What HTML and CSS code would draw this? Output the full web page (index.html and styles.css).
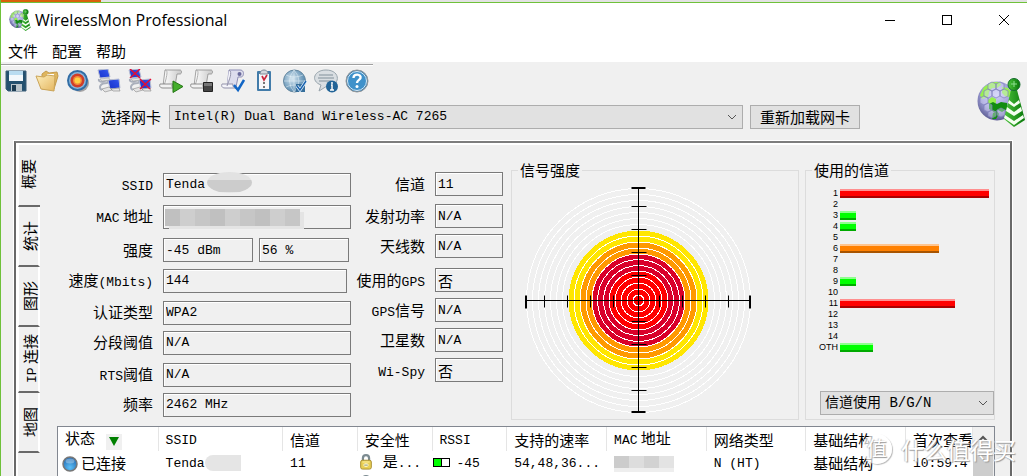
FILE: index.html
```html
<!DOCTYPE html>
<html lang="zh-CN">
<head>
<meta charset="utf-8">
<title>WirelessMon Professional</title>
<link rel="stylesheet" href="styles.css">
</head>
<body>
<svg class="defs" width="0" height="0" aria-hidden="true">
  <defs>
    <radialGradient id="globeFill" cx=".5" cy=".35" r=".65"><stop offset="0" stop-color="#cfcff6"/><stop offset=".6" stop-color="#9c9cd4"/><stop offset="1" stop-color="#5c5c92"/></radialGradient>
    <linearGradient id="greenFill" x1="0" x2="1"><stop offset="0" stop-color="#4cc43c"/><stop offset="1" stop-color="#08770a"/></linearGradient>
    <linearGradient id="paper" x1="0" x2="1"><stop offset="0" stop-color="#fff"/><stop offset="1" stop-color="#c8c8c8"/></linearGradient>
    <linearGradient id="folder" x1="0" y1="0" x2="1" y2="1"><stop offset="0" stop-color="#fdeebb"/><stop offset="1" stop-color="#e4b660"/></linearGradient>
    <linearGradient id="screen" x1="0" y1="1" x2="1" y2="0"><stop offset="0" stop-color="#0c20b4"/><stop offset=".6" stop-color="#2a4be4"/><stop offset="1" stop-color="#6f95ff"/></linearGradient>
    <radialGradient id="blueBall" cx=".5" cy=".75" r=".8"><stop offset="0" stop-color="#5cc0f8"/><stop offset="1" stop-color="#1a5da6"/></radialGradient>
    <radialGradient id="greenBall" cx=".5" cy=".75" r=".8"><stop offset="0" stop-color="#a6dc78"/><stop offset="1" stop-color="#4f8a3a"/></radialGradient>
    <radialGradient id="netFill" cx=".4" cy=".4" r=".6"><stop offset="0" stop-color="#d5e6f0"/><stop offset="1" stop-color="#5588ae"/></radialGradient>
    <symbol id="logo" viewBox="0 0 49 49">
      <circle cx="20" cy="23" r="19.500" fill="url(#globeFill)"/>
      <path d="M3 17 7 9l8-5 8 0 1 3-4 3-5 0-3 4-1 5-6 2zM25 9l6 1 4 5-3 4-4-1-3-3zM11 22l4-3 4 2 0 4-4 2-4-2z" fill="#97f04f"/>
      <path d="m12 26 4-2 4 2 4-2 6 1v6l-5 3-4-2-4 2-5-3zM16 35l4-2 2 3-3 5-4 0z" fill="#128d10"/>
      <g fill="#e4e4ff" fill-opacity=".4" stroke="#8080bc" stroke-width=".7"><path d="m11 6 4-2 4 2v5l-4 2-4-2zM19 6l4-2 4 2v5l-4 2-4-2zM15 13l4-2 4 2v5l-4 2-4-2zM7 13l4-2 4 2v5l-4 2-4-2zM3 20l4-2 4 2v5l-4 2-4-2zM7 27l4-2 4 2v5l-4 2-4-2zM23 13l4-2 4 2v5l-4 2-4-2zM11 34l4-2 4 2v4l-4 2-4-2zM20 32l4-2 4 2v5l-4 2-4-2z"/></g>
      <path d="M34 12h6l8 30-11 7-10-8z" fill="url(#greenFill)"/>
      <path d="m32 22 5 4 5-4 1 3-6 4-6-4zm-2 7 7 5 7-5 1 4-8 5-8-5zm-2 8 9 6 9-6 1 3-10 7-10-7z" fill="#f4fff0"/>
      <circle cx="37" cy="6.500" r="6" fill="url(#greenFill)" stroke="#146d2c"/><path d="M34 6h6m-3-3v6" stroke="#8ddf90"/>
    </symbol>
    <symbol id="nodes" viewBox="0 0 24 24">
      <path d="M2 10c-1 3 3 3 5 2 4-1 6 0 3 2-7 0-9 5-5 7" fill="none" stroke="#a9afbb" stroke-width="2"/>
      <path d="m1 1 10-1 2 8-10 1zM11 11l11-1 1 9-10 1z" fill="url(#screen)" stroke="#b9bfd2"/>
      <path d="m3 10 9-1 1 2-8 1z" fill="#e4e4e4" stroke="#999" stroke-width=".5"/>
      <path d="m5 20 7-2 3 3-7 2zM14 20l8-1 1 3h-7z" fill="#e4e4e4" stroke="#888" stroke-width=".6"/>
    </symbol>
    <symbol id="scroll" viewBox="0 0 24 24">
      <path d="M6 1h15c2 0 2 4 0 4h-3l-2 12H4z" fill="url(#paper)" stroke="#8d8d8d" stroke-width=".8"/><path d="M6 1c3 0 2 4 1 9l-2 7" fill="none" stroke="#b0b0b0"/>
      <path d="M1 15h13c-2 1-1 4 1 4H4c-3 0-4-2-3-4z" fill="#f2f2f2" stroke="#777" stroke-width=".8"/>
    </symbol>
    <symbol id="lock" viewBox="0 0 14 18"><path d="M3.500 8V5c0-5 7-5 7 0v3" fill="none" stroke="#7c8b91" stroke-width="2.500"/><rect x="1" y="7" width="12" height="10" rx="2" fill="#e8cf55" stroke="#a48728"/><path d="M3 9h8" stroke="#fff3a8"/><ellipse cx="7" cy="12.500" rx="3" ry="2" fill="#fff9d7"/><path d="M5 12.500h4" stroke="#7f8a5c"/></symbol>
  </defs>
</svg>

<div class="window">
  <div class="backdrop"></div>
  <header class="titlebar">
    <svg class="app-icon"><use href="#logo"/></svg>
    <h1 class="title">WirelessMon Professional</h1>
    <div class="window-buttons">
      <button aria-label="最小化"><svg width="12" height="12"><path d="M1 6.500h10" stroke="#000"/></svg></button>
      <button aria-label="最大化"><svg width="12" height="12"><rect x="1.500" y="1.500" width="9" height="9" fill="none" stroke="#000"/></svg></button>
      <button aria-label="关闭"><svg width="12" height="12"><path d="m1 1 10 10M11 1 1 11" stroke="#000"/></svg></button>
    </div>
  </header>
  <nav class="menu"><button>文件</button><button>配置</button><button>帮助</button></nav>

  <div class="top">
    <div class="top-main">
      <div class="toolbar">
        <button aria-label="保存"><svg viewBox="0 0 24 24"><path d="M2 2h20v20H4l-2-2z" fill="#24516f" stroke="#3c5f78"/><path d="M5 2h14v10H5z" fill="#f3f8fb"/><path d="M5 2h14v4H5z" fill="#b9dcf0"/><path d="M7 15h11v7H7z" fill="#b9c4ca"/><path d="M8 16h4v6H8z" fill="#1c3c52"/></svg></button>
        <button aria-label="打开"><svg viewBox="0 0 24 24"><path d="M7 5 11 2l3 2 8-1 1 4-4 13H7z" fill="#dfb65e" stroke="#c39a4c"/><path d="M12 5h7v7h-7z" fill="#fff"/><path d="m1 7 8 1 3-2 8 1-1 15-13-2z" fill="url(#folder)" stroke="#cba559"/></svg></button>
        <button aria-label="信号"><svg viewBox="0 0 24 24"><ellipse cx="14" cy="14" rx="9" ry="9" fill="#a5a3a4"/><circle cx="11.500" cy="11.500" r="10.500" fill="#316da5"/><circle cx="11.500" cy="11.500" r="8.500" fill="#87b6dc"/><circle cx="11.500" cy="11.500" r="7" fill="#cf3e29"/><circle cx="11.500" cy="11.500" r="4.500" fill="#f38a39"/><circle cx="11.500" cy="11.500" r="3" fill="#ffd042"/></svg></button>
        <button aria-label="连接"><svg><use href="#nodes"/></svg></button>
        <button aria-label="断开"><svg viewBox="0 0 24 24"><use href="#nodes"/><path d="m2 0 10 9M12 0 2 9M12 10l10 10M23 10 12 20" stroke="#e40e35" stroke-width="1.500"/></svg></button>
        <button aria-label="开始记录"><svg viewBox="0 0 24 24"><use href="#scroll"/><path d="m14 12 10 5.500-10 6z" fill="#45ae2c" stroke="#247714"/></svg></button>
        <button aria-label="停止记录"><svg viewBox="0 0 24 24"><use href="#scroll"/><path d="M13.500 13.500h9v9h-9z" fill="#444" stroke="#222"/><path d="M14 14h8v3h-8z" fill="#777"/></svg></button>
        <button aria-label="记录选项"><svg viewBox="0 0 24 24"><path d="M8 1h11c5 0 4 7 1 7h-3l-2 10H6z" fill="#dddded" stroke="#8d8db5"/><path d="M8 1c4 2 0 10-2 16M1 15h11c-1 2 1 4 3 4H4c-3 0-4-2-3-4z" fill="#f4f4fa" stroke="#9292aa"/><circle cx="18.500" cy="5" r="2" fill="#69699b"/><path d="m13 16 4 5 6-10" fill="none" stroke="#1266c6" stroke-width="2.500"/></svg></button>
        <button aria-label="配置"><svg viewBox="0 0 24 24"><rect x="5" y="2" width="14" height="20" rx="1" fill="#427caa"/><path d="M7 5h10v15H7z" fill="#f7f8fb"/><path d="M8 4c1-4 7-4 8 0v1H8z" fill="#d3d8dd" stroke="#7e8b96"/><path d="m10 7 2 4 3-5" fill="none" stroke="#c9273c" stroke-width="1.700"/><path d="M12 13v2m0 2v2" stroke="#777" stroke-width="2"/></svg></button>
        <button aria-label="网络"><svg viewBox="0 0 24 24"><circle cx="11.500" cy="12" r="11" fill="url(#netFill)" stroke="#6688a0"/><path d="M1 12h21M11 1v22M3 6q8 4 17 0M3 18q8-4 17 0M11 1q-9 11 0 22M11 1q10 11 0 22" fill="none" stroke="#edf7fb" stroke-opacity=".6" stroke-width=".8"/><path d="M13 15h9v8h-9z" fill="#356e9b"/><path d="m14 17 3 4 6-9" fill="none" stroke="#e7f4ff" stroke-width="3"/><path d="m14 17 3 4 6-9" fill="none" stroke="#1a62ae" stroke-width="1.500"/></svg></button>
        <button aria-label="信息"><svg viewBox="0 0 24 24"><path d="M12 1c15 0 15 16 1 16l-8 5 2-6C-4 12 0 1 12 1z" fill="#d9dee2" stroke="#99a5ad"/><path d="M5 6h14M4 9h16M5 12h12" stroke="#9faab2" stroke-width="1.500"/><circle cx="18" cy="17.500" r="6" fill="#226497"/><path d="M18 13v2m-1 1h1v5m-2 0h4" stroke="#fff" stroke-width="1.500"/></svg></button>
        <button aria-label="帮助"><svg viewBox="0 0 24 24"><circle cx="12" cy="12" r="11" fill="#347bb0" stroke="#999"/><circle cx="12" cy="12" r="9.500" fill="#3f91ca" stroke="#d8eaf5"/><path d="M8.500 9c0-5 8-4 7 0-.5 2-3.500 2-3.500 5" fill="none" stroke="#fff" stroke-width="2.400"/><circle cx="12" cy="17.500" r="1.500" fill="#fff"/></svg></button>
      </div>
      <div class="adapter">
        <label for="adapter">选择网卡</label>
        <select id="adapter" class="combo mono"><option>Intel(R) Dual Band Wireless-AC 7265</option></select>
        <button class="reload">重新加载网卡</button>
      </div>
    </div>
    <svg class="logo"><use href="#logo"/></svg>
  </div>

  <main class="panel">
    <div class="tabs">
      <button class="tab active"><span>概要</span></button>
      <button class="tab"><span>统计</span></button>
      <button class="tab"><span>图形</span></button>
      <button class="tab long"><span><i>IP</i> 连接</span></button>
      <button class="tab"><span>地图</span></button>
    </div>
    <div class="content">
      <div class="summary">
        <div class="fields primary">
          <label for="ssid"><i>SSID</i></label><div class="field"><input id="ssid" value="Tenda" readonly><span class="mask mask-ssid"></span></div>
          <label for="mac"><i>MAC</i> 地址</label><div class="field"><input id="mac" readonly><span class="mask mask-mac"></span></div>
          <label for="dbm">强度</label><div class="field pair"><input id="dbm" value="-45 dBm" readonly><input aria-label="强度百分比" value="56 %" readonly></div>
          <label for="speed">速度<i>(Mbits)</i></label><div class="field narrow"><input id="speed" value="144" readonly></div>
          <label for="auth">认证类型</label><div class="field"><input id="auth" value="WPA2" readonly></div>
          <label for="frag">分段阈值</label><div class="field"><input id="frag" value="N/A" readonly></div>
          <label for="rts"><i>RTS</i>阈值</label><div class="field"><input id="rts" value="N/A" readonly></div>
          <label for="freq">频率</label><div class="field"><input id="freq" value="2462 MHz" readonly></div>
        </div>
        <div class="fields secondary">
          <label for="chan">信道</label><input id="chan" value="11" readonly>
          <label for="power">发射功率</label><input id="power" value="N/A" readonly>
          <label for="ant">天线数</label><input id="ant" value="N/A" readonly>
          <label for="gps">使用的<i>GPS</i></label><input id="gps" class="zh" value="否" readonly>
          <label for="gpssig"><i>GPS</i>信号</label><input id="gpssig" value="N/A" readonly>
          <label for="sat">卫星数</label><input id="sat" value="N/A" readonly>
          <label for="spy"><i>Wi-Spy</i></label><input id="spy" class="zh" value="否" readonly>
        </div>
        <fieldset class="group signal">
          <legend>信号强度</legend>
          <svg class="target" width="228" height="228" viewBox="-113.500 -113.500 228 228">
            <g shape-rendering="crispEdges">
              <circle r="70" fill="#ffe600"/><circle r="58.500" fill="#ff9900"/><circle r="46.500" fill="#d90029"/><circle r="29.500" fill="#f00"/>
              <g fill="none" stroke="#fff"><circle r="5.500"/><circle r="11.500"/><circle r="17.500"/><circle r="23.500"/><circle r="29.500"/><circle r="35"/><circle r="41"/><circle r="46.500"/><circle r="52.500"/><circle r="58.500"/><circle r="64.500"/><circle r="76"/><circle r="82"/><circle r="88"/><circle r="94"/><circle r="100"/><circle r="106"/><circle r="112"/></g>
            </g>
            <g stroke="#000" fill="none"><path d="M-113 0H112M0-113V112M-94-5v12M-71-5v12M-48-5v12M-25-5v12M21-5v12M44-5v12M67-5v12M90-5v12M-7-94h15M-7-71h15M-7-48h15M-7-25h15M-7 21h15M-7 44h15M-7 67h15M-7 90h15"/><path d="M-112.500-5v13M111.500-5v13M-7-112.500H7M-7 111.500H7" stroke-width="2"/></g>
          </svg>
        </fieldset>
        <fieldset class="group channels">
          <legend>使用的信道</legend>
          <ul class="bars">
            <li><b>1</b><span class="bar red" style="width:149px"></span></li><li><b>2</b></li>
            <li><b>3</b><span class="bar green" style="width:16px"></span></li>
            <li><b>4</b><span class="bar green" style="width:16px"></span></li><li><b>5</b></li>
            <li><b>6</b><span class="bar orange" style="width:99px"></span></li><li><b>7</b></li><li><b>8</b></li>
            <li><b>9</b><span class="bar green" style="width:16px"></span></li><li><b>10</b></li>
            <li><b>11</b><span class="bar red" style="width:115px"></span></li><li><b>12</b></li><li><b>13</b></li><li><b>14</b></li>
            <li><b>OTH</b><span class="bar green" style="width:33px"></span></li>
          </ul>
          <select class="combo mixed" aria-label="信道使用"><option>信道使用 B/G/N</option></select>
        </fieldset>
      </div>
      <div class="list">
        <table>
          <colgroup><col class="c-state"><col class="c-ssid"><col class="c-s"><col class="c-s"><col class="c-s"><col class="c-m"><col class="c-m"><col class="c-m"><col class="c-m"><col></colgroup>
          <thead><tr><th>状态 <span class="sort"><svg width="10" height="9"><path d="M0 0h10L5 9z" fill="#008000"/></svg></span></th><th><i>SSID</i></th><th>信道</th><th>安全性</th><th><i>RSSI</i></th><th>支持的速率</th><th><i>MAC</i> 地址</th><th>网络类型</th><th>基础结构</th><th>首次查看</th></tr></thead>
          <tbody>
            <tr><td class="iconic"><svg class="ball" viewBox="0 0 16 16"><circle cx="8" cy="8" r="7" fill="url(#blueBall)" stroke="#777" stroke-width="1.500"/><ellipse cx="8" cy="5" rx="4.500" ry="2.500" fill="#fff" opacity=".3"/></svg>已连接</td><td><i>Tenda</i><span class="smudge name"></span></td><td><i>11</i></td><td class="iconic lock"><svg><use href="#lock"/></svg>是<i>...</i></td><td class="rssi"><span class="meter"></span><i>-45</i></td><td><i>54,48,36...</i></td><td><span class="smudge address"></span></td><td><i>N (HT)</i></td><td>基础结构</td><td><i>10:59:4</i></td></tr>
            <tr><td class="iconic"><svg class="ball" viewBox="0 0 16 16"><circle cx="8" cy="8" r="7" fill="url(#greenBall)" stroke="#777" stroke-width="1.500"/></svg>可用</td><td></td><td></td><td class="iconic lock"><svg><use href="#lock"/></svg>是<i>...</i></td><td class="rssi"><span class="meter"></span></td><td></td><td></td><td><i>N (HT)</i></td><td>基础结构</td><td></td></tr>
          </tbody>
        </table>
        <div class="scrollbar"><svg width="20" height="28"><path d="m6 14 4-4 4 4" fill="none" stroke="#555" stroke-width="2"/></svg><div class="thumb"></div></div>
      </div>
    </div>
  </main>
  <div class="watermark"><span class="badge">值</span><span>什么值得买</span></div>
</div>
</body>
</html>
```
FILE: styles.css
```css
* { box-sizing: border-box; }
body {
  margin: 0;
  height: 100vh;
  overflow: hidden;
  background: #f0f0f0;
  color: #000;
  font: 15px/20px "Noto Sans CJK SC", sans-serif;
}
i { font: 13px/18px "Liberation Mono", monospace; }
button, input, select { font: inherit; color: inherit; }
button { border: 0; padding: 0; background: none; }
.defs { position: absolute; }
.window { position: relative; height: 100vh; overflow: hidden; display: flex; flex-direction: column; border-left: 1px solid #6fc13a; }
.backdrop { flex: none; height: 3px; border-bottom: 1px solid #6fc13a; background: linear-gradient(90deg, #d9600b 100px, #e2e2e2 100px); }

.titlebar { flex: none; height: 34px; display: flex; align-items: center; background: #fff; padding-left: 8px; }
.app-icon { width: 22px; height: 22px; margin-right: 4px; }
.title { margin: 0; flex: 1; font: 16px/20px "Open Sans", "Noto Sans", sans-serif; }
.window-buttons { display: flex; gap: 11px; }
.window-buttons button { width: 46px; height: 34px; display: grid; place-items: center; }
.menu { flex: none; height: 25px; display: flex; gap: 14px; align-items: center; padding: 2px 7px 0; background: #fff; }

.top { flex: none; display: flex; justify-content: space-between; height: 79px; }
.top-main { flex: 1; }
.toolbar { display: flex; gap: 7px; width: 372px; margin-top: 2px; padding: 4px 2px 0 3px; border-top: 1px solid #a0a0a0; box-shadow: inset 0 1px #fff; }
.toolbar button, .toolbar svg { display: block; width: 24px; height: 24px; }
.adapter { display: flex; align-items: center; margin: 12px 117px 0 100px; }
.adapter label { width: 68px; }
.combo {
  height: 24px;
  border: 1px solid #adadad;
  border-radius: 0;
  padding: 0 20px 0 4px;
  appearance: none;
  background: #e1e1e1 url("data:image/svg+xml,%3Csvg xmlns='http://www.w3.org/2000/svg' width='10' height='6'%3E%3Cpath d='m1 1 4 4 4-4' fill='none' stroke='%23555'/%3E%3C/svg%3E") no-repeat right 5px center;
}
.mono { font: 13px/20px "Liberation Mono", monospace; }
.mixed { font: 14px/20px "Liberation Mono", "Noto Sans CJK SC", monospace; }
#adapter { flex: 1; min-width: 0; }
.reload { width: 110px; height: 24px; margin-left: 7px; border: 1px solid #adadad; background: #e1e1e1; }
.logo { width: 49px; height: 49px; margin: 16px 1px 0 0; }

.panel { flex: 1; min-height: 0; display: flex; margin: 0 15px 0 13px; border: 2px solid #696969; border-top-color: #7d7d7d; border-bottom: 0; outline: 1px solid #fff; box-shadow: inset 2px 2px #fff; }
.tabs { flex: none; width: 24px; padding-left: 2px; }
.tab { display: flex; width: 22px; height: 60px; padding: 5px 3px; border-bottom: 2px solid #696969; border-right: 2px solid #fff; border-left: 1px solid #fff; }
.tab.active { height: 64px; padding: 8px 1px; border-right: 0; }
.tab.long { height: 66px; }
.tab span { writing-mode: vertical-rl; text-orientation: sideways; transform: rotate(180deg); line-height: 16px; white-space: nowrap; }
.tab i { line-height: 16px; }
.content { flex: 1; min-width: 0; padding: 17px 15px 0 17px; }
.summary { display: flex; height: 260px; }
.fields { display: grid; column-gap: 10px; align-content: start; padding-top: 12px; }
.fields label { text-align: right; line-height: 24px; white-space: nowrap; }
.fields input { width: 100%; height: 24px; border: 1px solid #7a7a7a; box-shadow: inset 1px 1px #fff; background: #f0f0f0; padding: 0 2px; font: 13px/20px "Liberation Mono", monospace; }
.fields input.zh { font: 15px/20px "Noto Sans CJK SC", sans-serif; }
.primary { grid-template: 32px 34px 30px 32px 30px 32px 30px 24px / 96px 188px; }
.secondary { grid-template: 32px 30px 34px 30px 30px 30px 24px / 74px 68px; margin-right: 8px; }
.field { position: relative; }
.pair { display: flex; gap: 6px; padding-right: 2px; }
.narrow { padding-right: 4px; }
.mask { position: absolute; }
.mask-ssid { left: 44px; top: 0; width: 45px; height: 21px; border-radius: 50%; background: linear-gradient(#e2e2e2 8px, #ccc 8px, #ccc 20px, #e6e6e6 20px); }
.mask-mac { left: 2px; top: 5px; width: 135px; height: 17px; background: repeating-linear-gradient(90deg, #c0c0c0 0 15px, #cecece 15px 30px, #c6c6c6 30px 45px); box-shadow: 4px 3px #e4e4e4; }

.group { margin: 0; padding: 0; min-width: 0; border: 1px solid #dcdcdc; }
.group legend { margin-left: 6px; padding: 0 2px; line-height: 20px; }
.signal { flex: 1; margin-right: 6px; }
.target { display: block; margin: 7px 0 0 13px; }
.channels { width: 190px; }
.bars { list-style: none; margin: 8px 0 38px; padding: 0 0 0 10px; }
.bars li { display: flex; align-items: center; gap: 2px; height: 11px; }
.bars b { width: 22px; text-align: right; font: 9px/11px "Liberation Sans", sans-serif; }
.bar { height: 9px; }
.red { background: linear-gradient(#ff8f8f 2px, #f00 2px 7px, #a00 7px); }
.green { background: linear-gradient(#8fff8f 2px, #0f0 2px 7px, #0a0 7px); }
.orange { background: linear-gradient(#ffc58f 2px, #ff8000 2px 7px, #a85400 7px); }
.channels .combo { display: block; width: 174px; margin-left: auto; }

.list { display: flex; height: 120px; margin-top: 6px; border: 1px solid #828790; background: #fff; }
.list table { flex: 1; align-self: flex-start; min-width: 0; table-layout: fixed; border-collapse: collapse; }
.c-state { width: 101px; }
.c-ssid { width: 125px; }
.c-s { width: 75px; }
.c-m { width: 100px; }
.list th, .list td { padding: 0 0 0 7px; text-align: left; font-weight: 400; white-space: nowrap; overflow: hidden; line-height: 18px; }
.list th { height: 25px; background: linear-gradient(#e5e5e5, #e5e5e5) right top / 1px 24px no-repeat; }
.list td { height: 19px; }
.sort { display: inline-grid; place-items: center; width: 16px; height: 16px; margin-left: 8px; background: #f0f0f0; vertical-align: -2px; }
.list .iconic { padding-left: 4px; }
.iconic svg { width: 16px; height: 16px; margin-right: 3px; vertical-align: -3px; }
.lock svg { width: 14px; margin: 0 10px 0 -3px; }
.list .rssi { padding-left: 0; }
.meter { display: inline-block; width: 17px; height: 9px; margin-right: 7px; border: 1px solid #000; background: linear-gradient(90deg, #0f0 7px, #000 7px 8px, #fff 8px); }
.smudge { display: inline-block; height: 16px; vertical-align: -4px; }
.name { width: 36px; background: #e5e5e5; border-radius: 8px 0 0 8px; }
.address { width: 60px; background: linear-gradient(90deg, #ccc 15px, #ddd 15px 30px, #d2d2d2 30px 45px, #e3e3e3 45px); border-bottom: 4px solid #eee; }
.scrollbar { flex: none; width: 21px; padding-right: 1px; background: #f0f0f0; }
.scrollbar svg { display: block; }
.thumb { height: 60px; background: #cdcdcd; }

.watermark { position: absolute; right: 11px; bottom: 11px; display: flex; align-items: center; gap: 9px; color: #fff; font: 23px/32px "Noto Sans CJK SC", sans-serif; text-shadow: 1px 1px 1px #999, -1px 0 1px #ccc; pointer-events: none; }
.badge { width: 30px; height: 30px; border-radius: 50%; background: #ffffffb0; box-shadow: 1px 1px 1px #bbb; font-size: 20px; line-height: 28px; text-align: center; }
```
